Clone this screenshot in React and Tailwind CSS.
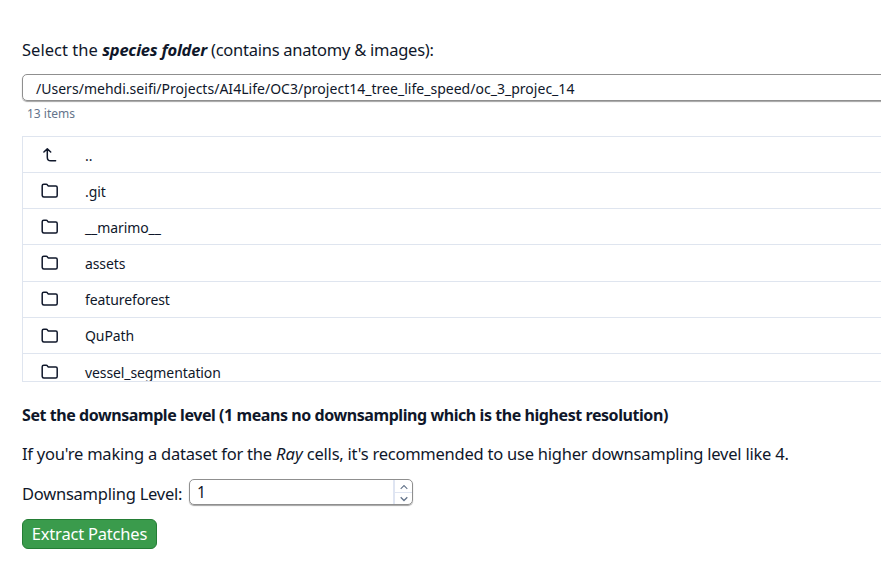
import { useState } from "react";

const folders = [
  { name: ".git", row: "h-9", text: "pt-[2px]" },
  { name: "__marimo__", row: "h-9", text: "pt-[2px]" },
  { name: "assets", row: "h-[37px] pb-px", text: "pt-[2px]" },
  { name: "featureforest", row: "h-9 pb-[2px]", text: "pt-[2px]" },
  { name: "QuPath", row: "h-9", text: "" },
  { name: "vessel_segmentation", row: "h-9", text: "pt-[2px]" },
];

function FolderIcon() {
  return (
    <svg className="h-[18px] w-[18px] shrink-0" viewBox="0 0 18 18" fill="none" stroke="currentColor" strokeWidth="1.5" strokeLinejoin="round">
      <path d="M1.2 3.8 Q1.2 2.2 2.8 2.2 H5.2 Q6 2.2 6.4 2.9 L7 3.7 Q7.4 4.1 8.1 4.1 H14.8 Q16.2 4.1 16.2 5.5 V13.4 Q16.2 14.9 14.7 14.9 H2.8 Q1.3 14.9 1.2 13.4 Z" />
    </svg>
  );
}

function UpIcon() {
  return (
    <svg className="h-[18px] w-[18px] shrink-0" viewBox="0 0 18 18" fill="none" stroke="currentColor" strokeWidth="1.5" strokeLinecap="round" strokeLinejoin="round">
      <path d="M2.9 6 L6.3 2.9 L9.7 6 M6.3 3 V11.2 Q6.3 14.8 9.8 14.8 H14.6" />
    </svg>
  );
}

export default function App() {
  const [level, setLevel] = useState(1);
  return (
    <main className="h-[566px] w-[881px] overflow-hidden bg-white pl-[22px] font-['Noto_Sans',sans-serif] text-[16.5px] whitespace-nowrap text-[#0f172a]">
      <p className="mt-[38px] h-6 leading-6 tracking-[-0.25px]">
        <span className="tracking-[0.03px]">Select the </span>
        <strong className="tracking-[-0.22px]"><em>species folder</em></strong>
        <span> (contains anatomy &amp; images):</span>
      </p>
      <div className="mt-3 flex h-[27px] w-[900px] items-center rounded-[5px] border border-[#8f8f8f] pl-[13px] shadow-[0_1px_1px_#a5a5a5]">
        <span className="pt-[2px] text-[14px] tracking-[0.02px]">/Users/mehdi.seifi/Projects/AI4Life/OC3/project14_tree_life_speed/oc_3_projec_14</span>
      </div>
      <div className="mt-[5px] ml-[5px] h-4 text-[12px] leading-4 text-[#64748b]">13 items</div>
      <div className="mt-[14px] h-[246px] w-[900px] overflow-hidden border border-[#dfe5ef] text-[14px] tracking-[-0.1px]">
        <div className="flex h-9 items-center border-b border-[#dfe5ef] pl-[18px]">
          <UpIcon />
          <span className="ml-[26px] pt-[2px]">..</span>
        </div>
        {folders.map(({ name, row, text }) => (
          <div key={name} className={`flex items-center border-b border-[#dfe5ef] pl-[18px] ${row}`}>
            <FolderIcon />
            <span className={`ml-[26px] ${text}`}>{name}</span>
          </div>
        ))}
      </div>
      <p className="mt-[21px] h-6 text-[16px] leading-6 font-bold tracking-[-0.43px]">
        Set the downsample level (1 means no downsampling which is the highest resolution)
      </p>
      <p className="mt-[15px] h-6 leading-6 tracking-[-0.23px]">
        If you're making a dataset for the <em className="tracking-[0.1px]">Ray</em> cells, it's recommended to use higher downsampling level like 4.
      </p>
      <div className="mt-[13px] flex h-[27px] items-start">
        <span className="w-[167px] pt-[3px] leading-6 tracking-[-0.24px]">Downsampling Level:</span>
        <div className="flex h-[26px] w-[224px] overflow-hidden rounded-[5px] border border-[#8f8f8f] shadow-[0_1px_1px_#a5a5a5]">
          <span className="flex-1 pl-[7px] text-[15.5px] leading-6">{level}</span>
          <div className="flex w-[19px] flex-col border-l-2 border-[#dfe5f2] text-[#64748b]">
            <button aria-label="Increase" onClick={() => setLevel(level + 1)} className="flex h-[13px] items-center justify-center border-b border-[#dfe5f2] pt-px">
              <svg className="h-2 w-2" viewBox="0 0 8 8" fill="none" stroke="currentColor" strokeWidth="1.1"><path d="M.7 5.8 4 2.5 7.3 5.8" /></svg>
            </button>
            <button aria-label="Decrease" onClick={() => setLevel(Math.max(1, level - 1))} className="flex h-[11px] items-center justify-center">
              <svg className="h-2 w-2" viewBox="0 0 8 8" fill="none" stroke="currentColor" strokeWidth="1.3"><path d="M.7 2.2 4 5.5 7.3 2.2" /></svg>
            </button>
          </div>
        </div>
      </div>
      <button className="mt-[13px] flex h-[30px] w-[135px] items-center justify-center rounded-[6px] border border-[#247d35] bg-[#3a9b4c] tracking-[-0.2px] text-white">
        Extract Patches
      </button>
    </main>
  );
}
